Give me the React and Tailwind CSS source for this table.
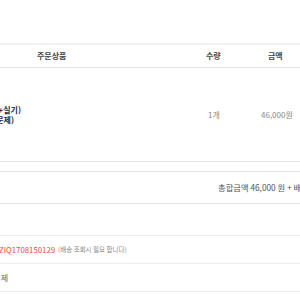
import React from "react";

const font = { fontFamily: '"Noto Sans CJK KR", "Noto Sans", sans-serif' };

function Cut({ w, children, className = "" }) {
  // text that is cut off on the left edge of the window
  return (
    <div className={`flex justify-end ${w}`}>
      <span className={`whitespace-nowrap shrink-0 ${className}`}>{children}</span>
    </div>
  );
}

export default function App() {
  return (
    <div
      className="w-[300px] h-[300px] overflow-hidden bg-white text-[8px] leading-none text-[#333]"
      style={font}
    >
      <div className="h-[43px]" />

      {/* order table */}
      <div className="border-t-2 border-[#f2f2f2]">
        <div className="flex h-[23px] items-center border-b border-[#e6e6e6] font-bold text-[#444]">
          <div className="w-[190px] pl-[37px]">주문상품</div>
          <div className="w-[50px] pl-[16px]">수량</div>
          <div className="w-[60px] pl-[28px]">금액</div>
        </div>
        <div className="flex h-[94px] items-center border-b border-[#e6e6e6]">
          <div className="w-[190px] flex flex-col gap-[2px] font-bold text-[#1f2a44]">
            <Cut w="w-[21px]">정보처리기사 (필기+실기)</Cut>
            <Cut w="w-[14px]">최신 기출문제)</Cut>
          </div>
          <div className="w-[50px] pl-[18px] text-[#888]">1개</div>
          <div className="w-[60px] pl-[21px] text-[#888]">46,000원</div>
        </div>
      </div>

      <div className="h-[9px]" />

      {/* summary */}
      <div className="flex h-[33px] items-center border-y border-[#e6e6e6] pl-[218px] text-[8.3px] text-[#555]">
        <span className="whitespace-nowrap">총합금액 46,000 원 + 배송비 0 원</span>
      </div>

      <div className="h-[32px] border-b border-[#ececec]" />

      <div className="flex h-[28px] items-center border-b border-[#ececec]">
        <span className="-ml-px whitespace-nowrap text-[7.8px] text-[#f04a4a]">
          ZIQ1708150129
        </span>
        <span className="ml-[3px] whitespace-nowrap text-[6.5px] text-[#888]">
          (배송 조회시 필요 합니다)
        </span>
      </div>

      <div className="flex h-[28px] items-center border-b border-[#ececec] text-[#666]">
        <Cut w="w-[8px]">무통장 입금 결제</Cut>
      </div>
    </div>
  );
}
